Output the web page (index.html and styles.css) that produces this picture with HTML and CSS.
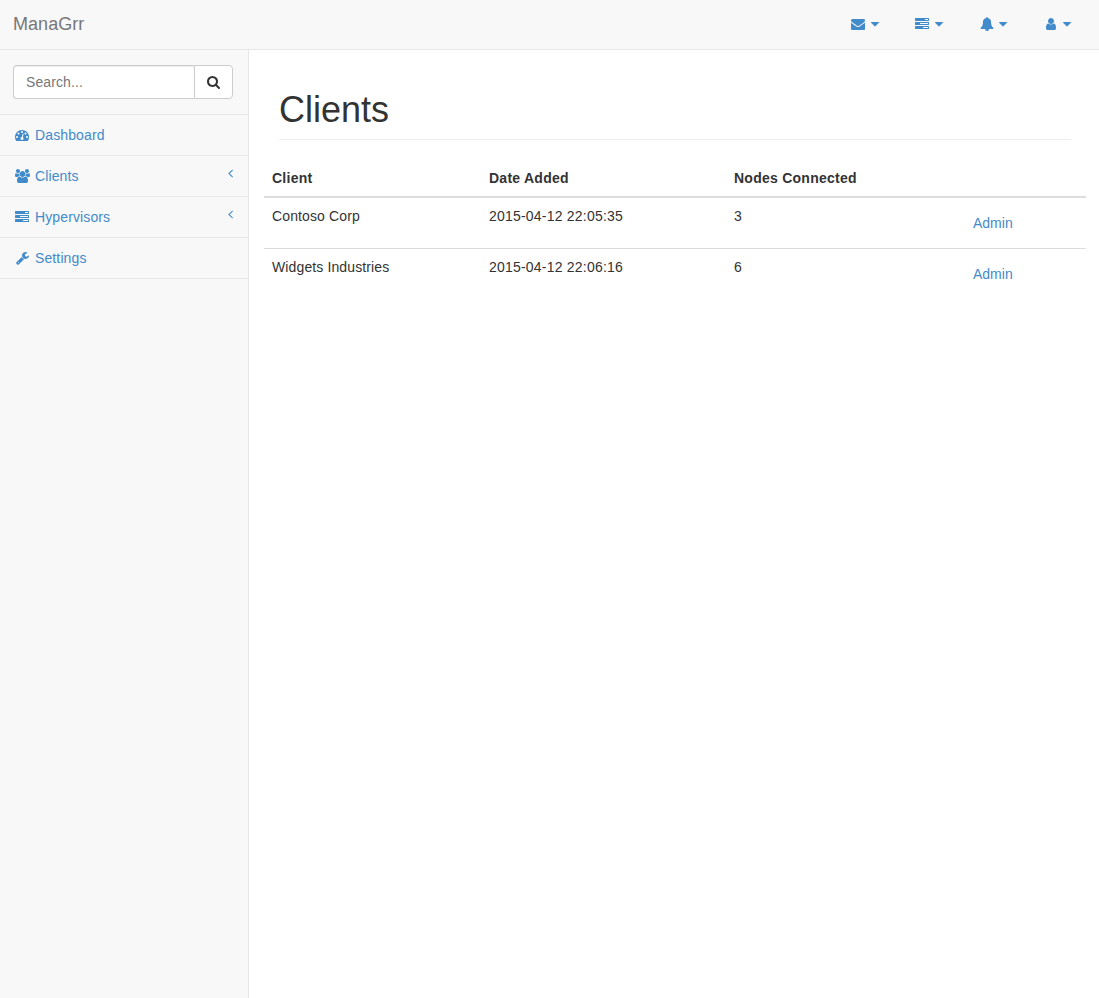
FILE: index.html
```html
<!DOCTYPE html>
<html lang="en">
<head>
<meta charset="utf-8">
<title>ManaGrr</title>
<link rel="stylesheet" href="styles.css">
</head>
<body>
<svg class="sprite" aria-hidden="true">
  <symbol id="caret" viewBox="0 0 1024 1792"><path transform="matrix(1 0 0 -1 0 1536)" d="M1024 832q0 -26 -19 -45l-448 -448q-19 -19 -45 -19t-45 19l-448 448q-19 19 -19 45t19 45t45 19h896q26 0 45 -19t19 -45z"/></symbol>
  <symbol id="angle" viewBox="0 0 640 1792"><path transform="matrix(1 0 0 -1 0 1536)" d="M627 992q0 -13 -10 -23l-393 -393l393 -393q10 -10 10 -23t-10 -23l-50 -50q-10 -10 -23 -10t-23 10l-466 466q-10 10 -10 23t10 23l466 466q10 10 23 10t23 -10l50 -50q10 -10 10 -23z"/></symbol>
  <symbol id="tasks" viewBox="0 0 1792 1792"><path d="M1024 1408h640v-128h-640v128zm-384-512h1024v-128h-1024v128zm640-512h384v-128h-384v128zm512 832v256q0 26-19 45t-45 19h-1664q-26 0-45-19t-19-45v-256q0-26 19-45t45-19h1664q26 0 45 19t19 45zm0-512v256q0 26-19 45t-45 19h-1664q-26 0-45-19t-19-45v-256q0-26 19-45t45-19h1664q26 0 45 19t19 45zm0-512v256q0 26-19 45t-45 19h-1664q-26 0-45-19t-19-45v-256q0-26 19-45t45-19h1664q26 0 45 19t19 45z"/></symbol>
</svg>
<header class="navbar">
  <a class="brand">ManaGrr</a>
  <nav class="top-links">
    <a class="top-link"><span class="icon-slot"><svg class="icon" viewBox="0 0 1792 1792"><path d="M1792 710v794q0 66-47 113t-113 47h-1472q-66 0-113-47t-47-113v-794q44 49 101 87 362 246 497 345 57 42 92.5 65.5t94.5 48 110 24.5h2q51 0 110-24.5t94.5-48 92.5-65.5q170-123 498-345 57-39 100-87zm0-294q0 79-49 151t-122 123q-376 261-468 325-10 7-42.5 31t-54 38.5-52 32.5-57.5 27-50 9h-2q-23 0-50-9t-57.5-27-52-32.5-54-38.5-42.5-31q-91-64-262-182.5t-205-142.5q-62-42-117-115.5t-55-136.5q0-78 41.5-130t118.5-52h1472q65 0 112.5 47t47.5 113z"/></svg></span><svg class="caret"><use href="#caret"/></svg></a>
    <a class="top-link"><span class="icon-slot"><svg class="icon"><use href="#tasks"/></svg></span><svg class="caret"><use href="#caret"/></svg></a>
    <a class="top-link"><span class="icon-slot"><svg class="icon icon-narrow" viewBox="0 0 1792 1792"><path d="M912 1696q0-16-16-16-59 0-101.5-42.5t-42.5-101.5q0-16-16-16t-16 16q0 73 51.5 124.5t124.5 51.5q16 0 16-16zm816-288q0 52-38 90t-90 38h-448q0 106-75 181t-181 75-181-75-75-181h-448q-52 0-90-38t-38-90q50-42 91-88t85-119.5 74.5-158.5 50-206 19.5-260q0-152 117-282.5t307-158.5q-8-19-8-39 0-40 28-68t68-28 68 28 28 68q0 20-8 39 190 28 307 158.5t117 282.5q0 139 19.5 260t50 206 74.5 158.5 85 119.5 91 88z"/></svg></span><svg class="caret"><use href="#caret"/></svg></a>
    <a class="top-link"><span class="icon-slot"><svg class="icon icon-narrow" viewBox="0 0 1792 1792"><path d="M1536 1399q0 109-62.5 187t-150.5 78h-854q-88 0-150.5-78t-62.5-187q0-85 8.5-160.5t31.5-152 58.5-131 94-89 134.5-34.5q131 128 313 128t313-128q76 0 134.5 34.5t94 89 58.5 131 31.5 152 8.5 160.5zm-256-887q0 159-112.5 271.5t-271.5 112.5-271.5-112.5-112.5-271.5 112.5-271.5 271.5-112.5 271.5 112.5 112.5 271.5z"/></svg></span><svg class="caret"><use href="#caret"/></svg></a>
  </nav>
</header>
<div class="layout">
  <aside class="sidebar">
    <div class="search">
      <input class="search-input" type="text" placeholder="Search...">
      <button class="search-btn" type="button" aria-label="Search"><svg class="search-icon" viewBox="64 0 1664 1792"><path d="M1216 832q0-185-131.5-316.5t-316.5-131.5-316.5 131.5-131.5 316.5 131.5 316.5 316.5 131.5 316.5-131.5 131.5-316.5zm512 832q0 52-38 90t-90 38q-54 0-90-38l-343-342q-179 124-399 124-143 0-273.5-55.5t-225-150-150-225-55.5-273.5 55.5-273.5 150-225 225-150 273.5-55.5 273.5 55.5 225 150 150 225 55.5 273.5q0 220-124 399l343 343q37 37 37 90z"/></svg></button>
    </div>
    <a class="side-link"><span class="icon-slot"><svg class="icon" viewBox="0 0 1792 1792"><path d="M384 1152q0-53-37.500-90.500t-90.500-37.500-90.500 37.500-37.500 90.500 37.500 90.500 90.500 37.500 90.500-37.500 37.500-90.500zm192-448q0-53-37.500-90.500t-90.500-37.500-90.500 37.500-37.500 90.500 37.500 90.500 90.500 37.500 90.500-37.500 37.500-90.500zm428 481l101-382q6-26-7.500-48.500t-38.500-29.500-48 6.500-30 39.500l-101 382q-60 5-107 43.500t-63 98.500q-20 77 20 146t117 89 146-20 89-117q16-60-6-117t-72-91zm660-33q0-53-37.500-90.500t-90.500-37.500-90.500 37.500-37.500 90.500 37.500 90.500 90.500 37.500 90.500-37.500 37.500-90.500zm-640-640q0-53-37.500-90.500t-90.500-37.500-90.500 37.500-37.500 90.500 37.500 90.500 90.500 37.500 90.500-37.500 37.500-90.500zm448 192q0-53-37.500-90.500t-90.500-37.500-90.500 37.500-37.500 90.500 37.500 90.500 90.500 37.500 90.500-37.500 37.500-90.500zm320 448q0 261-141 483-19 29-54 29h-1402q-35 0-54-29-141-221-141-483 0-182 71-348t191-286 286-191 348-71 348 71 286 191 191 286 71 348z"/></svg></span>Dashboard</a>
    <a class="side-link"><span class="icon-slot"><svg class="icon icon-users" viewBox="0 0 1920 1792"><path transform="matrix(1 0 0 -1 0 1536)" d="M593 640q-162 -5 -265 -128h-134q-82 0 -138 40.5t-56 118.5q0 353 124 353q6 0 43.5 -21t97.5 -42.5t119 -21.5q67 0 133 23q-5 -37 -5 -66q0 -143 81 -256zM1664 3q0 -120 -73 -189.5t-194 -69.5h-874q-121 0 -194 69.5t-73 189.5q0 53 3.5 103.5t14 109t26.5 108.5t43 97.5t62 81t85.5 53.5t111.5 20q10 0 43 -21.5t73 -48t107 -48t135 -21.5t135 21.5t107 48t73 48t43 21.5q61 0 111.5 -20t85.5 -53.5t62 -81t43 -97.5t26.5 -108.5t14 -109t3.5 -103.5zM640 1280q0 -106 -75 -181t-181 -75t-181 75t-75 181t75 181t181 75t181 -75t75 -181zM1344 896q0 -159 -112.5 -271.5t-271.5 -112.5t-271.5 112.5t-112.5 271.5t112.5 271.5t271.5 112.5t271.5 -112.5t112.5 -271.5zM1920 671q0 -78 -56 -118.5t-138 -40.5h-134q-103 123 -265 128q81 113 81 256q0 29 -5 66q66 -23 133 -23q59 0 119 21.5t97.5 42.5t43.5 21q124 0 124 -353zM1792 1280q0 -106 -75 -181t-181 -75t-181 75t-75 181t75 181t181 75t181 -75t75 -181z"/></svg></span>Clients<svg class="arrow"><use href="#angle"/></svg></a>
    <a class="side-link"><span class="icon-slot"><svg class="icon"><use href="#tasks"/></svg></span>Hypervisors<svg class="arrow"><use href="#angle"/></svg></a>
    <a class="side-link"><span class="icon-slot"><svg class="icon icon-wrench" viewBox="0 0 1664 1792"><path transform="matrix(1 0 0 -1 0 1536)" d="M384 64q0 26 -19 45t-45 19t-45 -19t-19 -45t19 -45t45 -19t45 19t19 45zM1028 484l-682 -682q-37 -37 -90 -37q-52 0 -91 37l-106 108q-38 36 -38 90q0 53 38 91l681 681q39 -98 114.5 -173.5t173.5 -114.5zM1662 919q0 -39 -23 -106q-47 -134 -164.5 -217.5t-258.5 -83.5q-185 0 -316.5 131.5t-131.5 316.5t131.5 316.5t316.5 131.5q58 0 121.5 -16.5t107.5 -46.5q16 -11 16 -28t-16 -28l-293 -169v-224l193 -107q5 3 79 48.5t135.5 81t70.5 35.5q15 0 23.5 -10t8.5 -25z"/></svg></span>Settings</a>
  </aside>
  <main class="content">
    <h1 class="page-header">Clients</h1>
    <table class="table">
      <colgroup><col class="col-client"><col class="col-date"><col class="col-nodes"><col></colgroup>
      <thead>
        <tr><th>Client</th><th>Date Added</th><th>Nodes Connected</th><th></th></tr>
      </thead>
      <tbody>
        <tr><td>Contoso Corp</td><td class="date">2015-04-12 22:05:35</td><td>3</td><td><a class="btn-link">Admin</a></td></tr>
        <tr><td>Widgets Industries</td><td class="date">2015-04-12 22:06:16</td><td>6</td><td><a class="btn-link">Admin</a></td></tr>
      </tbody>
    </table>
  </main>
</div>
</body>
</html>
```
FILE: styles.css
```css
* { box-sizing: border-box; }

body {
  margin: 0;
  min-height: 100vh;
  display: flex;
  flex-direction: column;
  background: #fff;
  color: #333;
  font: 14px/20px "Liberation Sans", Arial, sans-serif;
}

.sprite { display: none; }

svg { display: block; fill: currentColor; flex: none; }

.navbar {
  height: 50px;
  display: flex;
  justify-content: space-between;
  padding: 0 13px;
  background: #f8f8f8;
  border-bottom: 1px solid #e7e7e7;
}

.brand {
  padding-top: 14px;
  font-size: 18px;
  letter-spacing: .05px;
  color: #777;
}

.top-links { display: flex; gap: 4px; }

.top-link {
  display: flex;
  align-items: center;
  gap: 4px;
  padding: 0 15px;
  height: 48px;
  color: #428bca;
}

.icon-slot {
  width: 18px;
  display: flex;
  justify-content: center;
  flex: none;
}

.icon { width: 14px; height: 14px; }
.icon-narrow { margin-left: 1px; }
.icon-users { width: 15px; }
.icon-wrench { width: 13px; }
.caret { width: 8px; height: 14px; }

.layout { flex: 1; display: flex; }

.sidebar {
  width: 249px;
  flex: none;
  background: #f8f8f8;
  border-right: 1px solid #e7e7e7;
}

.search {
  display: flex;
  padding: 15px 15px 15px 13px;
  border-bottom: 1px solid #e7e7e7;
}

.search-input {
  flex: 1;
  min-width: 0;
  height: 34px;
  padding: 6px 12px;
  border: 1px solid #ccc;
  border-right: 0;
  border-radius: 4px 0 0 4px;
  background: #fff;
  box-shadow: inset 0 1px 1px rgba(0, 0, 0, .075);
  font: inherit;
  letter-spacing: .1px;
  color: #555;
}

.search-input::placeholder { color: #777; opacity: 1; }

.search-btn {
  width: 39px;
  height: 34px;
  padding: 0 0 0 12px;
  display: flex;
  align-items: center;
  border: 1px solid #ccc;
  border-radius: 0 4px 4px 0;
  background: #fff;
  color: #333;
}

.search-icon { width: 13px; height: 14px; }

.side-link {
  height: 41px;
  display: flex;
  align-items: center;
  gap: 4px;
  padding: 10px 15px 10px 13px;
  border-bottom: 1px solid #e7e7e7;
  letter-spacing: .12px;
  color: #428bca;
}

.arrow {
  width: 5px;
  height: 14px;
  margin-left: auto;
  align-self: flex-start;
}

.content { padding: 0 13px 0 15px; flex: 1; }

.page-header {
  height: 50px;
  margin: 40px 15px 20px;
  border-bottom: 1px solid #eee;
  font-size: 36px;
  font-weight: 500;
  line-height: 40px;
}

.table {
  width: 100%;
  table-layout: fixed;
  border-collapse: separate;
  border-spacing: 0;
}

.col-client { width: 217px; }
.col-date { width: 245px; }
.col-nodes { width: 226px; }

.table th,
.table td {
  padding: 8px;
  text-align: left;
  vertical-align: top;
  letter-spacing: .12px;
}

.table th {
  height: 38px;
  border-bottom: 2px solid #ddd;
  letter-spacing: .25px;
}

.table .date { letter-spacing: .21px; }
.table tr + tr td { border-top: 1px solid #ddd; }

.btn-link {
  display: block;
  height: 34px;
  padding: 7px 13px;
  letter-spacing: 0;
  color: #428bca;
}
```
